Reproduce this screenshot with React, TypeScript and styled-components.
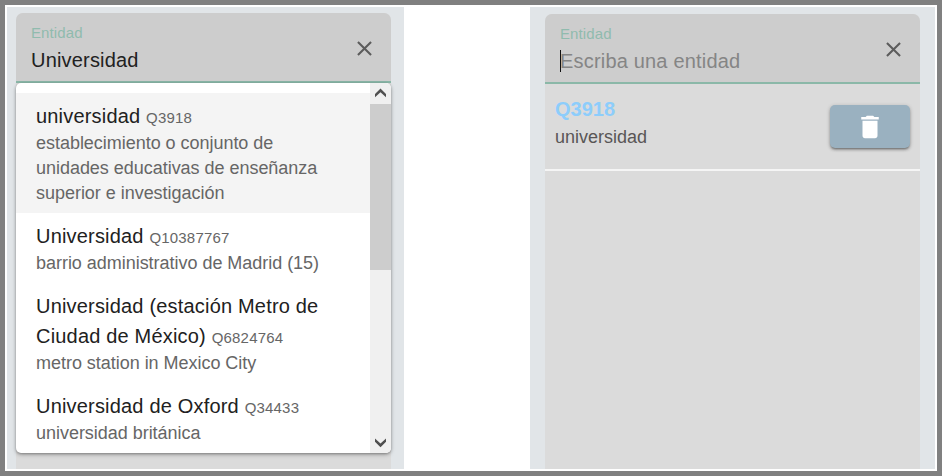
import React from 'react';
import styled, { createGlobalStyle } from 'styled-components';

const GlobalStyle = createGlobalStyle`
  * { box-sizing: border-box; }
  body { margin: 0; background: #808080; font-family: "Liberation Sans", Arial, sans-serif; }
`;

const Frame = styled.main`
  width: 942px;
  height: 476px;
  border: 5px solid #808080;
  background: #fff;
  padding: 2px;
  display: flex;
  justify-content: space-between;
  overflow: hidden;
`;

const Panel = styled.section<{ $width: number; $padding: string }>`
  width: ${(p) => p.$width}px;
  height: 462px;
  padding: ${(p) => p.$padding};
  background: #e1e5e8;
`;

const Card = styled.div`
  position: relative;
  width: 375px;
  height: 100%;
  background: #dbdbdb;
  border-radius: 7px 7px 0 0;
`;

const Field = styled.label`
  display: flex;
  align-items: center;
  justify-content: space-between;
  height: 70px;
  padding: 0 14px 0 15px;
  background: #cdcdcd;
  border-bottom: 2px solid #8bb8a8;
  border-radius: 7px 7px 0 0;
`;

const FieldText = styled.div`
  padding-top: 4px;
`;

const FieldLabel = styled.div`
  font-size: 15px;
  line-height: 20px;
  letter-spacing: 0.1px;
  color: #90bbae;
`;

const Value = styled.div<{ $placeholder?: boolean }>`
  display: flex;
  align-items: center;
  height: 30px;
  margin-top: 2px;
  font-size: 20px;
  letter-spacing: 0.1875px;
  white-space: nowrap;
  color: ${(p) => (p.$placeholder ? '#858585' : '#212121')};
`;

const Caret = styled.span`
  width: 1px;
  height: 22px;
  margin-right: -1px;
  background: #111;
`;

const ClearIcon = styled.svg`
  width: 25px;
  height: 25px;
  margin-top: 3px;
  fill: #5c5c5c;
`;

const Dropdown = styled.div`
  position: absolute;
  top: 70px;
  left: 0;
  width: 375px;
  height: 370px;
  display: flex;
  background: #fff;
  border-radius: 5px;
  overflow: hidden;
  box-shadow: 0 1px 3px rgba(0, 0, 0, 0.35), 0 2px 5px rgba(0, 0, 0, 0.16);
`;

const Options = styled.div`
  flex: 1;
  padding-top: 10px;
`;

const Option = styled.div<{ $active?: boolean }>`
  padding: 8px 20px 7px;
  background: ${(p) => (p.$active ? '#f4f4f4' : 'transparent')};
`;

const OptionTitle = styled.div`
  font-size: 20px;
  line-height: 30px;
  letter-spacing: 0.1875px;
  color: #212121;
`;

const OptionId = styled.span`
  font-size: 15px;
  line-height: 1;
  letter-spacing: 0.1875px;
  color: #666;
`;

const Description = styled.div`
  font-size: 18px;
  line-height: 25px;
  letter-spacing: -0.03px;
  color: #666;
`;

const Scrollbar = styled.div`
  width: 21px;
  display: flex;
  flex-direction: column;
  background: #f0f0f0;
`;

const ScrollArrow = styled.div`
  height: 21px;
  display: flex;
  align-items: center;
  justify-content: center;
  svg { width: 21px; height: 21px; }
`;

const ScrollThumb = styled.div`
  height: 166px;
  margin-bottom: auto;
  background: #cdcdcd;
`;

const Item = styled.div`
  display: flex;
  justify-content: space-between;
  align-items: flex-start;
  height: 87px;
  padding: 10px 10px 0;
  border-bottom: 2px solid #f5f5f5;
`;

const ItemId = styled.div`
  font-size: 20px;
  font-weight: bold;
  line-height: 30px;
  color: #8dcdfb;
`;

const ItemName = styled.div`
  font-size: 18px;
  line-height: 26px;
  color: #595656;
`;

const DeleteButton = styled.button`
  display: flex;
  align-items: center;
  justify-content: center;
  width: 80px;
  height: 43px;
  margin-top: 11px;
  padding: 0;
  border: 0;
  border-radius: 5px;
  background: #9ab1c0;
  box-shadow: 0 2px 3px -1px rgba(0, 0, 0, 0.5), 0 1px 4px rgba(0, 0, 0, 0.2);
  svg { width: 30px; height: 30px; fill: #fff; }
`;

interface Entity {
  label: string;
  id: string;
  description: string;
}

const entities: Entity[] = [
  {
    label: 'universidad',
    id: 'Q3918',
    description: 'establecimiento o conjunto de unidades educativas de enseñanza superior e investigación',
  },
  { label: 'Universidad', id: 'Q10387767', description: 'barrio administrativo de Madrid (15)' },
  {
    label: 'Universidad (estación Metro de Ciudad de México)',
    id: 'Q6824764',
    description: 'metro station in Mexico City',
  },
  { label: 'Universidad de Oxford', id: 'Q34433', description: 'universidad británica' },
];

function EntityField({ value, placeholder }: { value?: string; placeholder?: string }) {
  return (
    <Field>
      <FieldText>
        <FieldLabel>Entidad</FieldLabel>
        <Value $placeholder={!value}>
          {!value && <Caret />}
          {value || placeholder}
        </Value>
      </FieldText>
      <ClearIcon viewBox="0 0 24 24">
        <path d="M19 6.41 17.59 5 12 10.59 6.41 5 5 6.41 10.59 12 5 17.59 6.41 19 12 13.41 17.59 19 19 17.59 13.41 12z" />
      </ClearIcon>
    </Field>
  );
}

export default function App() {
  return (
    <>
      <GlobalStyle />
      <Frame>
        <Panel $width={397} $padding="6px 13px 0 9px">
          <Card>
            <EntityField value="Universidad" />
            <Dropdown>
              <Options>
                {entities.map((entity, index) => (
                  <Option key={entity.id} $active={index === 0}>
                    <OptionTitle>
                      {entity.label} <OptionId>{entity.id}</OptionId>
                    </OptionTitle>
                    <Description>{entity.description}</Description>
                  </Option>
                ))}
              </Options>
              <Scrollbar>
                <ScrollArrow>
                  <svg viewBox="0 0 21 21">
                    <path d="M5 11 10.500 5.500l5.500 5.500v3.300l-5.500-5-5.500 5z" fill="#505050" />
                  </svg>
                </ScrollArrow>
                <ScrollThumb />
                <ScrollArrow>
                  <svg viewBox="0 0 21 21">
                    <path d="M5 9.800l5.500 5.500 5.500-5.500V6.500l-5.500 5-5.500-5z" fill="#505050" />
                  </svg>
                </ScrollArrow>
              </Scrollbar>
            </Dropdown>
          </Card>
        </Panel>
        <Panel $width={405} $padding="7px 15px 0">
          <Card>
            <EntityField placeholder="Escriba una entidad" />
            <Item>
              <div>
                <ItemId>Q3918</ItemId>
                <ItemName>universidad</ItemName>
              </div>
              <DeleteButton aria-label="Eliminar">
                <svg viewBox="0 0 24 24">
                  <path d="M6 19c0 1.1.9 2 2 2h8c1.1 0 2-.9 2-2V7H6v12zM19 4h-3.500l-1-1h-5l-1 1H5v2h14V4z" />
                </svg>
              </DeleteButton>
            </Item>
          </Card>
        </Panel>
      </Frame>
    </>
  );
}
